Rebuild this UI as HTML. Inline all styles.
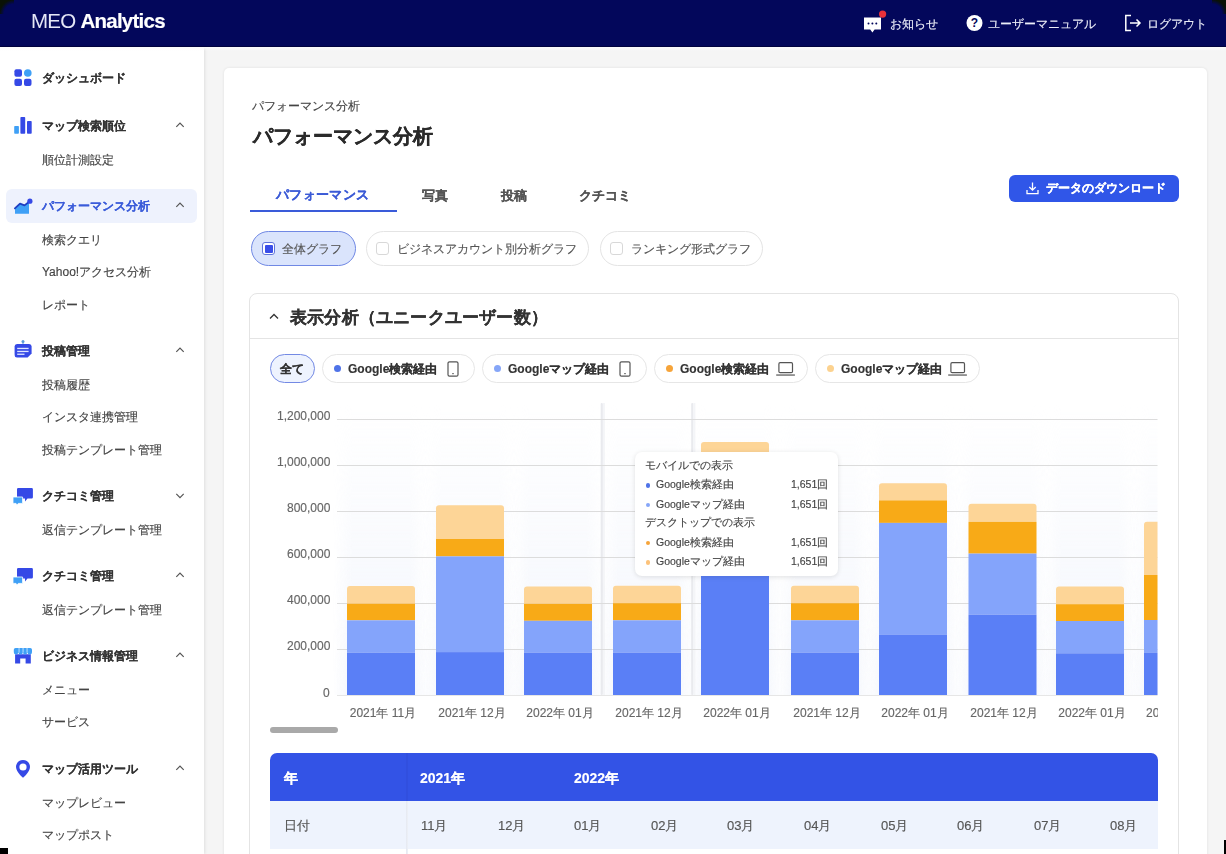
<!DOCTYPE html>
<html lang="ja"><head><meta charset="utf-8">
<style>
*{box-sizing:border-box;margin:0;padding:0}
html,body{width:1226px;height:854px;overflow:hidden;background:#f5f5f5;font-family:"Liberation Sans",sans-serif;color:#333}
.abs{position:absolute}
.t,.si,.ss{will-change:transform;-webkit-text-stroke:0.15px currentColor}
.si{-webkit-text-stroke:0.1px currentColor}
.hdr{position:absolute;left:0;top:0;width:1226px;height:47px;background:#03075b}
.side{position:absolute;left:0;top:47px;width:204px;height:807px;background:#fff;box-shadow:1px 0 3px rgba(0,0,0,.09)}
.t{position:absolute;white-space:nowrap;line-height:1}
.card{position:absolute;left:224px;top:68px;width:983px;height:820px;background:#fff;border-radius:5px;box-shadow:0 0 3px rgba(0,0,0,.09)}
.si{position:absolute;left:42px;font-size:12px;font-weight:bold;color:#333;white-space:nowrap;line-height:1}
.ss{position:absolute;left:42px;font-size:12px;color:#444;white-space:nowrap;line-height:1}
.chev{position:absolute;left:175px;width:10px;height:6px}
</style></head><body>

<div class="hdr">
<div class="t" style="left:31px;top:11px;font-size:20.5px;color:#fff;letter-spacing:-0.75px"><span style="font-weight:normal;color:#e4e6f6;-webkit-text-stroke:0">MEO</span> <span style="font-weight:bold">Analytics</span></div>
<svg class="abs" style="left:855px;top:5px" width="40" height="32" viewBox="855 5 40 32">
<path d="M864 17.6 H881 V29.5 H874.6 L872.4 32.4 L870.2 29.5 H864 Z" fill="#fff"/>
<circle cx="868.5" cy="23.4" r="1" fill="#03075b"/><circle cx="872.4" cy="23.4" r="1" fill="#03075b"/><circle cx="876.3" cy="23.4" r="1" fill="#03075b"/>
<circle cx="882.6" cy="14.1" r="3.6" fill="#e8313a"/></svg>
<div class="t" style="left:890px;top:17.5px;font-size:11.75px;color:#eceef8">お知らせ</div>
<svg class="abs" style="left:966px;top:14px" width="18" height="18" viewBox="0 0 18 18">
<circle cx="8.5" cy="9" r="8" fill="#fff"/>
<text x="8.5" y="13.2" text-anchor="middle" font-size="12" font-weight="bold" fill="#03075b" font-family="Liberation Sans">?</text></svg>
<div class="t" style="left:988px;top:17.5px;font-size:11.75px;color:#eceef8">ユーザーマニュアル</div>
<svg class="abs" style="left:1124px;top:14px" width="18" height="18" viewBox="0 0 18 18" fill="none" stroke="#fff" stroke-width="1.5">
<path d="M7 1.5 H1.8 V16.5 H7"/><path d="M6 9 H16 M12.5 5.5 L16 9 L12.5 12.5"/></svg>
<div class="t" style="left:1147px;top:17.5px;font-size:11.75px;color:#eceef8">ログアウト</div>
<div class="abs" style="left:0;top:45.5px;width:1226px;height:1.5px;background:#01023f"></div>
</div>
<div class="side"></div>
<div class="abs" style="left:0;top:47px;width:1226px;height:4px;background:linear-gradient(#fbfbfd,rgba(245,245,245,0))"></div>
<div class="abs" style="left:6px;top:189px;width:191px;height:34px;background:#eef2fd;border-radius:6px"></div>
<div class="si" style="top:71.5px">ダッシュボード</div>
<div class="si" style="top:119.5px">マップ検索順位</div>
<svg class="chev" style="top:122.0px" viewBox="0 0 10 6.5" width="10" height="6.5"><path d="M1 5.2 L5 1.1 L9 5.2" fill="none" stroke="#555" stroke-width="1.3"/></svg>
<div class="ss" style="top:153.5px">順位計測設定</div>
<div class="si" style="top:199.5px;color:#3a5bd9">パフォーマンス分析</div>
<svg class="chev" style="top:202.0px" viewBox="0 0 10 6.5" width="10" height="6.5"><path d="M1 5.2 L5 1.1 L9 5.2" fill="none" stroke="#555" stroke-width="1.3"/></svg>
<div class="ss" style="top:233.5px">検索クエリ</div>
<div class="ss" style="top:265.5px">Yahoo!アクセス分析</div>
<div class="ss" style="top:298.5px">レポート</div>
<div class="si" style="top:344.5px">投稿管理</div>
<svg class="chev" style="top:347.0px" viewBox="0 0 10 6.5" width="10" height="6.5"><path d="M1 5.2 L5 1.1 L9 5.2" fill="none" stroke="#555" stroke-width="1.3"/></svg>
<div class="ss" style="top:378.5px">投稿履歴</div>
<div class="ss" style="top:410.5px">インスタ連携管理</div>
<div class="ss" style="top:443.5px">投稿テンプレート管理</div>
<div class="si" style="top:489.5px">クチコミ管理</div>
<svg class="chev" style="top:493.4px" viewBox="0 0 10 6.5" width="10" height="6.5"><path d="M1 1 L5 5 L9 1" fill="none" stroke="#555" stroke-width="1.3"/></svg>
<div class="ss" style="top:523.5px">返信テンプレート管理</div>
<div class="si" style="top:569.5px">クチコミ管理</div>
<svg class="chev" style="top:572.0px" viewBox="0 0 10 6.5" width="10" height="6.5"><path d="M1 5.2 L5 1.1 L9 5.2" fill="none" stroke="#555" stroke-width="1.3"/></svg>
<div class="ss" style="top:603.5px">返信テンプレート管理</div>
<div class="si" style="top:649.5px">ビジネス情報管理</div>
<svg class="chev" style="top:652.0px" viewBox="0 0 10 6.5" width="10" height="6.5"><path d="M1 5.2 L5 1.1 L9 5.2" fill="none" stroke="#555" stroke-width="1.3"/></svg>
<div class="ss" style="top:683.5px">メニュー</div>
<div class="ss" style="top:715.5px">サービス</div>
<div class="si" style="top:762.5px">マップ活用ツール</div>
<svg class="chev" style="top:765.0px" viewBox="0 0 10 6.5" width="10" height="6.5"><path d="M1 5.2 L5 1.1 L9 5.2" fill="none" stroke="#555" stroke-width="1.3"/></svg>
<div class="ss" style="top:796.5px">マップレビュー</div>
<div class="ss" style="top:828.5px">マップポスト</div>
<svg class="abs" style="left:0;top:62px" width="40" height="32" viewBox="0 62 40 32">
<rect x="14.4" y="69.3" width="7.6" height="7.5" rx="2" fill="#3549e6"/><circle cx="27.8" cy="73" r="3.8" fill="#3fa0f6"/>
<rect x="14.4" y="78.7" width="7.6" height="7.4" rx="2" fill="#3549e6"/><rect x="24" y="78.7" width="7.5" height="7.4" rx="2" fill="#3549e6"/></svg>
<svg class="abs" style="left:0;top:110px" width="40" height="32" viewBox="0 110 40 32">
<rect x="14.2" y="125.9" width="4.7" height="7.9" rx="0.8" fill="#3fa0f6"/><rect x="20.4" y="116.9" width="4.8" height="16.9" rx="0.8" fill="#3549e6"/><rect x="27" y="120.9" width="4.7" height="12.9" rx="0.8" fill="#3549e6"/></svg>
<svg class="abs" style="left:0;top:190px" width="40" height="32" viewBox="0 190 40 32">
<path d="M15 213.8 V208.5 L20 203.8 L24.5 205.6 L29 201.5 V213.8 Z" fill="#3fa0f6"/>
<path d="M14.9 208.4 L20 203.7 L24.5 205.4 L29.5 201.5" fill="none" stroke="#1f3ec2" stroke-width="1.8" stroke-linejoin="round" stroke-linecap="round"/>
<circle cx="29.9" cy="201.2" r="2.6" fill="#3549e6"/></svg>
<svg class="abs" style="left:0;top:336px" width="40" height="32" viewBox="0 336 40 32">
<path d="M14.6 346.5 Q14.6 344 17 344 H29.2 Q31.6 344 31.6 346.5 V353.5 L27.6 357.5 H17 Q14.6 357.5 14.6 355 Z" fill="#3549e6"/>
<circle cx="23" cy="341.6" r="1.5" fill="#5b9bd8"/><rect x="22.5" y="342" width="1" height="2" fill="#5b9bd8"/>
<rect x="17.2" y="347.8" width="11.4" height="1.3" fill="#dfe6ff"/><rect x="17.2" y="350.8" width="11.4" height="1.3" fill="#dfe6ff"/><rect x="17.2" y="353.6" width="7.3" height="1.3" fill="#dfe6ff"/></svg>
<svg class="abs" style="left:0;top:480px" width="40" height="32" viewBox="0 480 40 32">
<path d="M17 489.2 Q17 488 18.2 488 H31.7 Q32.9 488 32.9 489.2 V497.3 Q32.9 498.5 31.7 498.5 H27.5 L25 501.5 V498.5 H18.2 Q17 498.5 17 497.3 Z" fill="#3549e6"/>
<path d="M13 497 H22.6 V503.4 H18.3 L17 505.3 L16 503.4 H13 Z" fill="#3fa0f6" stroke="#fff" stroke-width="0.8"/></svg>
<svg class="abs" style="left:0;top:560px" width="40" height="32" viewBox="0 480 40 32">
<path d="M17 489.2 Q17 488 18.2 488 H31.7 Q32.9 488 32.9 489.2 V497.3 Q32.9 498.5 31.7 498.5 H27.5 L25 501.5 V498.5 H18.2 Q17 498.5 17 497.3 Z" fill="#3549e6"/>
<path d="M13 497 H22.6 V503.4 H18.3 L17 505.3 L16 503.4 H13 Z" fill="#3fa0f6" stroke="#fff" stroke-width="0.8"/></svg>
<svg class="abs" style="left:0;top:640px" width="40" height="32" viewBox="0 640 40 32">
<path d="M15.1 654.3 H30.8 V663.6 H25.6 V658.4 H20.2 V663.6 H15.1 Z" fill="#3549e6"/>
<path d="M13.8 649.8 Q13.8 648 15.6 648 H30.2 Q32 648 32 649.8 V652.3 Q32 654.6 29.8 654.6 Q27.6 654.6 27.4 652.6 Q27 654.6 25 654.6 Q23.2 654.6 22.9 652.6 Q22.6 654.6 20.6 654.6 Q18.6 654.6 18.3 652.6 Q18 654.6 16 654.6 Q13.8 654.6 13.8 652.3 Z" fill="#3fa0f6"/>
<rect x="18.6" y="648" width="0.9" height="4.6" fill="#c9e6fd"/><rect x="22.6" y="648" width="0.9" height="4.6" fill="#c9e6fd"/><rect x="26.6" y="648" width="0.9" height="4.6" fill="#c9e6fd"/>
</svg>
<svg class="abs" style="left:0;top:752px" width="40" height="32" viewBox="0 752 40 32">
<path d="M23 760 C19.1 760 16 763 16 766.9 C16 771.5 23 777.8 23 777.8 C23 777.8 30 771.5 30 766.9 C30 763 26.9 760 23 760 Z" fill="#3549e6"/>
<circle cx="23" cy="767" r="3.6" fill="#fff"/></svg>
<div class="card"></div>
<div class="t" style="left:252px;top:99.5px;font-size:11.75px;color:#444">パフォーマンス分析</div>
<div class="t" style="left:252.5px;top:125.5px;font-size:20.3px;font-weight:bold;color:#2b2b2b;-webkit-text-stroke:0.3px #2b2b2b">パフォーマンス分析</div>
<div class="t" style="left:276px;top:188px;font-size:13px;font-weight:bold;color:#3c5bd6;letter-spacing:0.35px">パフォーマンス</div>
<div class="abs" style="left:250px;top:210px;width:147px;height:1.6px;background:#3a5bd9"></div>
<div class="t" style="left:422px;top:188.5px;font-size:13px;font-weight:bold;color:#555">写真</div>
<div class="t" style="left:501px;top:188.5px;font-size:13px;font-weight:bold;color:#555">投稿</div>
<div class="t" style="left:579px;top:188.5px;font-size:13px;font-weight:bold;color:#555">クチコミ</div>
<div class="abs" style="left:1009px;top:175px;width:170px;height:27px;background:#3056e8;border-radius:6px"></div>
<svg class="abs" style="left:1026px;top:181.5px" width="13" height="13" viewBox="0 0 13 13" fill="none" stroke="#fff" stroke-width="1.3">
<path d="M6.5 0.5 V8.2 M3.3 5 L6.5 8.2 L9.7 5"/><path d="M1 8 V11.6 H12 V8"/></svg>
<div class="t" style="left:1046px;top:182px;font-size:12px;font-weight:bold;color:#fff">データのダウンロード</div>
<div class="abs" style="left:251px;top:231px;width:105px;height:35px;background:#dae4fc;border:1px solid #7088e4;border-radius:18px"></div>
<div class="abs" style="left:262px;top:242px;width:13px;height:13px;border:1px solid #6075db;border-radius:3px;background:#fff"></div>
<div class="abs" style="left:264.5px;top:244.5px;width:8px;height:8px;background:#3a4ee8;border-radius:1px"></div>
<div class="t" style="left:282px;top:243px;font-size:12px;color:#555">全体グラフ</div>
<div class="abs" style="left:366px;top:231px;width:223px;height:35px;background:#fff;border:1px solid #e4e4e4;border-radius:18px"></div>
<div class="abs" style="left:376px;top:242px;width:13px;height:13px;border:1px solid #d8d8d8;border-radius:3px;background:#fff"></div>
<div class="t" style="left:397px;top:243px;font-size:12px;color:#555">ビジネスアカウント別分析グラフ</div>
<div class="abs" style="left:600px;top:231px;width:163px;height:35px;background:#fff;border:1px solid #e4e4e4;border-radius:18px"></div>
<div class="abs" style="left:610px;top:242px;width:13px;height:13px;border:1px solid #d8d8d8;border-radius:3px;background:#fff"></div>
<div class="t" style="left:631px;top:243px;font-size:12px;color:#555">ランキング形式グラフ</div>
<div class="abs" style="left:249px;top:293px;width:930px;height:600px;border:1px solid #e4e4e4;border-radius:8px"></div>
<div class="abs" style="left:250px;top:338px;width:928px;height:1px;background:#e4e4e4"></div>
<svg class="abs" style="left:269px;top:313px" width="10" height="6.5" viewBox="0 0 10 6.5"><path d="M1 5.5 L5 1.5 L9 5.5" fill="none" stroke="#333" stroke-width="1.3"/></svg>
<div class="t" style="left:290px;top:309px;font-size:16.5px;font-weight:bold;color:#333;-webkit-text-stroke:0.25px #333;letter-spacing:0.2px">表示分析（ユニークユーザー数）</div>
<div class="abs" style="left:270px;top:354px;width:45px;height:29px;background:#eef3fe;border:1px solid #7389e4;border-radius:15px"></div>
<div class="t" style="left:280px;top:363px;font-size:12px;font-weight:bold;color:#333">全て</div>
<div class="abs" style="left:322px;top:354px;width:153px;height:29px;background:#fff;border:1px solid #e6e6e6;border-radius:15px"></div>
<div class="abs" style="left:334px;top:365px;width:7px;height:7px;border-radius:50%;background:#4f73e8"></div>
<div class="t" style="left:348px;top:363px;font-size:12px;font-weight:bold;color:#333">Google検索経由</div>
<svg class="abs" style="left:447px;top:361px" width="12" height="16" viewBox="0 0 12 16"><rect x="1" y="0.8" width="10" height="14.4" rx="1.5" fill="none" stroke="#555" stroke-width="1.2"/><rect x="5.3" y="12" width="1.4" height="1.2" fill="#555"/></svg>
<div class="abs" style="left:482px;top:354px;width:165px;height:29px;background:#fff;border:1px solid #e6e6e6;border-radius:15px"></div>
<div class="abs" style="left:494px;top:365px;width:7px;height:7px;border-radius:50%;background:#86a6f8"></div>
<div class="t" style="left:508px;top:363px;font-size:12px;font-weight:bold;color:#333">Googleマップ経由</div>
<svg class="abs" style="left:619px;top:361px" width="12" height="16" viewBox="0 0 12 16"><rect x="1" y="0.8" width="10" height="14.4" rx="1.5" fill="none" stroke="#555" stroke-width="1.2"/><rect x="5.3" y="12" width="1.4" height="1.2" fill="#555"/></svg>
<div class="abs" style="left:654px;top:354px;width:154px;height:29px;background:#fff;border:1px solid #e6e6e6;border-radius:15px"></div>
<div class="abs" style="left:666px;top:365px;width:7px;height:7px;border-radius:50%;background:#f6a43a"></div>
<div class="t" style="left:680px;top:363px;font-size:12px;font-weight:bold;color:#333">Google検索経由</div>
<svg class="abs" style="left:776px;top:362px" width="19" height="14" viewBox="0 0 19 14"><rect x="2.9" y="0.7" width="13.6" height="10" rx="1.2" fill="none" stroke="#555" stroke-width="1.2"/><rect x="0.2" y="12.3" width="18.7" height="1.5" fill="#777"/></svg>
<div class="abs" style="left:815px;top:354px;width:165px;height:29px;background:#fff;border:1px solid #e6e6e6;border-radius:15px"></div>
<div class="abs" style="left:827px;top:365px;width:7px;height:7px;border-radius:50%;background:#fcd28f"></div>
<div class="t" style="left:841px;top:363px;font-size:12px;font-weight:bold;color:#333">Googleマップ経由</div>
<svg class="abs" style="left:948px;top:362px" width="19" height="14" viewBox="0 0 19 14"><rect x="2.9" y="0.7" width="13.6" height="10" rx="1.2" fill="none" stroke="#555" stroke-width="1.2"/><rect x="0.2" y="12.3" width="18.7" height="1.5" fill="#777"/></svg>
<svg class="abs" style="left:0;top:0" width="1226" height="854" viewBox="0 0 1226 854">
<defs><clipPath id="cc"><rect x="250" y="339" width="907.5" height="400"/></clipPath><linearGradient id="bandg" x1="0" x2="1" y1="0" y2="0"><stop offset="0" stop-color="#eef2fb" stop-opacity="0"/><stop offset="0.2" stop-color="#eef2fb"/><stop offset="0.8" stop-color="#eef2fb"/><stop offset="1" stop-color="#eef2fb" stop-opacity="0"/></linearGradient><linearGradient id="bandv" x1="0" x2="0" y1="0" y2="1"><stop offset="0" stop-color="#fff" stop-opacity="0"/><stop offset="1" stop-color="#fff" stop-opacity="1"/></linearGradient><mask id="bm"><rect x="0" y="403" width="1226" height="292" fill="url(#bandv)"/></mask></defs>
<g clip-path="url(#cc)">
<rect x="333" y="403" width="96" height="292" fill="url(#bandg)" opacity="0.7" mask="url(#bm)"/>
<rect x="422" y="403" width="96" height="292" fill="url(#bandg)" opacity="0.7" mask="url(#bm)"/>
<rect x="510" y="403" width="96" height="292" fill="url(#bandg)" opacity="0.7" mask="url(#bm)"/>
<rect x="599" y="403" width="96" height="292" fill="url(#bandg)" opacity="0.7" mask="url(#bm)"/>
<rect x="687" y="403" width="96" height="292" fill="url(#bandg)" opacity="0.7" mask="url(#bm)"/>
<rect x="777" y="403" width="96" height="292" fill="url(#bandg)" opacity="0.7" mask="url(#bm)"/>
<rect x="865" y="403" width="96" height="292" fill="url(#bandg)" opacity="0.7" mask="url(#bm)"/>
<rect x="954.5" y="403" width="96" height="292" fill="url(#bandg)" opacity="0.7" mask="url(#bm)"/>
<rect x="1042" y="403" width="96" height="292" fill="url(#bandg)" opacity="0.7" mask="url(#bm)"/>
<rect x="1130" y="403" width="96" height="292" fill="url(#bandg)" opacity="0.7" mask="url(#bm)"/>
<rect x="600.7" y="403" width="2.2" height="292" fill="#e9eaee" rx="1"/>
<rect x="602.9" y="403" width="2" height="292" fill="#f4f5f8"/>
<rect x="691.2" y="403" width="2.2" height="292" fill="#e9eaee" rx="1"/>
<rect x="693.4" y="403" width="2" height="292" fill="#f4f5f8"/>
<rect x="337" y="419.0" width="821" height="1" fill="#dcdcdc"/>
<rect x="337" y="465.0" width="821" height="1" fill="#dcdcdc"/>
<rect x="337" y="511.0" width="821" height="1" fill="#dcdcdc"/>
<rect x="337" y="557.0" width="821" height="1" fill="#dcdcdc"/>
<rect x="337" y="603.0" width="821" height="1" fill="#dcdcdc"/>
<rect x="337" y="649.0" width="821" height="1" fill="#dcdcdc"/>
<rect x="337" y="695" width="821" height="1" fill="#e6e6e6"/>
<path d="M347 603.7 V589 Q347 586 350 586 H412 Q415 586 415 589 V603.7 Z" fill="#fdd597"/>
<rect x="347" y="603.7" width="68" height="16.59999999999991" fill="#f8aa17"/>
<rect x="347" y="620.3" width="68" height="32.40000000000009" fill="#84a4fb"/>
<rect x="347" y="652.7" width="68" height="42.299999999999955" fill="#5a7ff6"/>
<path d="M436 539 V508.2 Q436 505.2 439 505.2 H501 Q504 505.2 504 508.2 V539 Z" fill="#fdd597"/>
<rect x="436" y="539" width="68" height="17.399999999999977" fill="#f8aa17"/>
<rect x="436" y="556.4" width="68" height="95.70000000000005" fill="#84a4fb"/>
<rect x="436" y="652.1" width="68" height="42.89999999999998" fill="#5a7ff6"/>
<path d="M524 603.8 V589.4 Q524 586.4 527 586.4 H589 Q592 586.4 592 589.4 V603.8 Z" fill="#fdd597"/>
<rect x="524" y="603.8" width="68" height="17.0" fill="#f8aa17"/>
<rect x="524" y="620.8" width="68" height="32.0" fill="#84a4fb"/>
<rect x="524" y="652.8" width="68" height="42.200000000000045" fill="#5a7ff6"/>
<path d="M613 603.2 V588.8 Q613 585.8 616 585.8 H678 Q681 585.8 681 588.8 V603.2 Z" fill="#fdd597"/>
<rect x="613" y="603.2" width="68" height="17.09999999999991" fill="#f8aa17"/>
<rect x="613" y="620.3" width="68" height="32.5" fill="#84a4fb"/>
<rect x="613" y="652.8" width="68" height="42.200000000000045" fill="#5a7ff6"/>
<path d="M701 462 V445 Q701 442 704 442 H766 Q769 442 769 445 V462 Z" fill="#fdd597"/>
<rect x="701" y="462" width="68" height="20" fill="#f8aa17"/>
<rect x="701" y="482" width="68" height="58" fill="#84a4fb"/>
<rect x="701" y="540" width="68" height="155" fill="#5a7ff6"/>
<path d="M791 603.2 V588.8 Q791 585.8 794 585.8 H856 Q859 585.8 859 588.8 V603.2 Z" fill="#fdd597"/>
<rect x="791" y="603.2" width="68" height="17.09999999999991" fill="#f8aa17"/>
<rect x="791" y="620.3" width="68" height="32.5" fill="#84a4fb"/>
<rect x="791" y="652.8" width="68" height="42.200000000000045" fill="#5a7ff6"/>
<path d="M879 500.4 V486.2 Q879 483.2 882 483.2 H944 Q947 483.2 947 486.2 V500.4 Z" fill="#fdd597"/>
<rect x="879" y="500.4" width="68" height="22.5" fill="#f8aa17"/>
<rect x="879" y="522.9" width="68" height="112.0" fill="#84a4fb"/>
<rect x="879" y="634.9" width="68" height="60.10000000000002" fill="#5a7ff6"/>
<path d="M968.5 521.8 V506.8 Q968.5 503.8 971.5 503.8 H1033.5 Q1036.5 503.8 1036.5 506.8 V521.8 Z" fill="#fdd597"/>
<rect x="968.5" y="521.8" width="68" height="31.800000000000068" fill="#f8aa17"/>
<rect x="968.5" y="553.6" width="68" height="61.10000000000002" fill="#84a4fb"/>
<rect x="968.5" y="614.7" width="68" height="80.29999999999995" fill="#5a7ff6"/>
<path d="M1056 604.2 V589.6 Q1056 586.6 1059 586.6 H1121 Q1124 586.6 1124 589.6 V604.2 Z" fill="#fdd597"/>
<rect x="1056" y="604.2" width="68" height="16.799999999999955" fill="#f8aa17"/>
<rect x="1056" y="621" width="68" height="32.299999999999955" fill="#84a4fb"/>
<rect x="1056" y="653.3" width="68" height="41.700000000000045" fill="#5a7ff6"/>
<path d="M1144 575 V524.8 Q1144 521.8 1147 521.8 H1209 Q1212 521.8 1212 524.8 V575 Z" fill="#fdd597"/>
<rect x="1144" y="575" width="68" height="45" fill="#f8aa17"/>
<rect x="1144" y="620" width="68" height="32.89999999999998" fill="#84a4fb"/>
<rect x="1144" y="652.9" width="68" height="42.10000000000002" fill="#5a7ff6"/>
</g>
</svg>
<div class="t" style="right:896px;top:409.5px;font-size:12px;color:#666">1,200,000</div>
<div class="t" style="right:896px;top:455.5px;font-size:12px;color:#666">1,000,000</div>
<div class="t" style="right:896px;top:501.5px;font-size:12px;color:#666">800,000</div>
<div class="t" style="right:896px;top:547.5px;font-size:12px;color:#666">600,000</div>
<div class="t" style="right:896px;top:593.5px;font-size:12px;color:#666">400,000</div>
<div class="t" style="right:896px;top:639.5px;font-size:12px;color:#666">200,000</div>
<div class="t" style="right:896px;top:686.5px;font-size:12px;color:#666">0</div>
<div class="t" style="left:342.5px;width:80px;text-align:center;top:707px;font-size:12px;color:#666">2021年 11月</div>
<div class="t" style="left:431.5px;width:80px;text-align:center;top:707px;font-size:12px;color:#666">2021年 12月</div>
<div class="t" style="left:519.5px;width:80px;text-align:center;top:707px;font-size:12px;color:#666">2022年 01月</div>
<div class="t" style="left:608.5px;width:80px;text-align:center;top:707px;font-size:12px;color:#666">2021年 12月</div>
<div class="t" style="left:696.5px;width:80px;text-align:center;top:707px;font-size:12px;color:#666">2022年 01月</div>
<div class="t" style="left:786.5px;width:80px;text-align:center;top:707px;font-size:12px;color:#666">2021年 12月</div>
<div class="t" style="left:874.5px;width:80px;text-align:center;top:707px;font-size:12px;color:#666">2022年 01月</div>
<div class="t" style="left:964.0px;width:80px;text-align:center;top:707px;font-size:12px;color:#666">2021年 12月</div>
<div class="t" style="left:1051.5px;width:80px;text-align:center;top:707px;font-size:12px;color:#666">2022年 01月</div>
<div class="abs" style="left:1146px;top:707px;width:11.5px;height:14px;overflow:hidden"><div class="t" style="position:static;font-size:12px;color:#666">2022年</div></div>
<div class="abs" style="left:270px;top:727px;width:68px;height:6px;border-radius:3px;background:#a9a9a9"></div>
<div class="abs" style="left:635px;top:452px;width:203px;height:124px;background:#fff;border-radius:7px;box-shadow:0 1px 5px rgba(0,0,0,.12)"></div>
<div class="t" style="left:645px;top:460.4px;font-size:10.5px;color:#444">モバイルでの表示</div>
<div class="abs" style="left:645.5px;top:483px;width:4.5px;height:4.5px;border-radius:50%;background:#4f73e8"></div>
<div class="t" style="left:656px;top:479px;font-size:10.5px;color:#444">Google検索経由</div>
<div class="t" style="right:398px;top:479px;font-size:10.5px;color:#444">1,651回</div>
<div class="abs" style="left:645.5px;top:502.5px;width:4.5px;height:4.5px;border-radius:50%;background:#86a6f8"></div>
<div class="t" style="left:656px;top:498.5px;font-size:10.5px;color:#444">Googleマップ経由</div>
<div class="t" style="right:398px;top:498.5px;font-size:10.5px;color:#444">1,651回</div>
<div class="t" style="left:645px;top:517px;font-size:10.5px;color:#444">デスクトップでの表示</div>
<div class="abs" style="left:645.5px;top:540.5px;width:4.5px;height:4.5px;border-radius:50%;background:#f6a43a"></div>
<div class="t" style="left:656px;top:536.5px;font-size:10.5px;color:#444">Google検索経由</div>
<div class="t" style="right:398px;top:536.5px;font-size:10.5px;color:#444">1,651回</div>
<div class="abs" style="left:645.5px;top:560px;width:4.5px;height:4.5px;border-radius:50%;background:#fcc27a"></div>
<div class="t" style="left:656px;top:556px;font-size:10.5px;color:#444">Googleマップ経由</div>
<div class="t" style="right:398px;top:556px;font-size:10.5px;color:#444">1,651回</div>
<div class="abs" style="left:270px;top:753px;width:888px;height:48px;background:#3353e6;border-radius:7px 7px 0 0"></div>
<div class="abs" style="left:270px;top:801px;width:888px;height:48px;background:#eef3fd"></div>
<div class="abs" style="left:406px;top:753px;width:2px;height:48px;background:rgba(0,0,40,.04)"></div>
<div class="abs" style="left:406px;top:801px;width:2px;height:60px;background:linear-gradient(90deg,#e4e8f1,#eef1f7)"></div>
<div class="t" style="left:284px;top:771px;font-size:14px;font-weight:bold;color:#fff">年</div>
<div class="t" style="left:420px;top:771px;font-size:14px;font-weight:bold;color:#fff">2021年</div>
<div class="t" style="left:574px;top:771px;font-size:14px;font-weight:bold;color:#fff">2022年</div>
<div class="t" style="left:284px;top:819px;font-size:13px;color:#555">日付</div>
<div class="t" style="left:421.0px;top:819px;font-size:13px;color:#555">11月</div>
<div class="t" style="left:497.6px;top:819px;font-size:13px;color:#555">12月</div>
<div class="t" style="left:574.2px;top:819px;font-size:13px;color:#555">01月</div>
<div class="t" style="left:650.8px;top:819px;font-size:13px;color:#555">02月</div>
<div class="t" style="left:727.4px;top:819px;font-size:13px;color:#555">03月</div>
<div class="t" style="left:804.0px;top:819px;font-size:13px;color:#555">04月</div>
<div class="t" style="left:880.6px;top:819px;font-size:13px;color:#555">05月</div>
<div class="t" style="left:957.2px;top:819px;font-size:13px;color:#555">06月</div>
<div class="t" style="left:1033.8px;top:819px;font-size:13px;color:#555">07月</div>
<div class="t" style="left:1110.4px;top:819px;font-size:13px;color:#555">08月</div>
<div class="abs" style="left:0;top:848px;width:8px;height:6px;background:#000"></div>
<div class="abs" style="left:0;top:0;width:14px;height:14px;background:radial-gradient(circle at 14px 14px, rgba(0,0,0,0) 10px, #0a1205 14.5px)"></div>
<div class="abs" style="left:1212px;top:0;width:14px;height:14px;background:radial-gradient(circle at 0px 14px, rgba(0,0,0,0) 10px, #0a1205 14.5px)"></div>
<div class="abs" style="left:1224px;top:840px;width:2px;height:14px;background:#000"></div>
</body></html>
